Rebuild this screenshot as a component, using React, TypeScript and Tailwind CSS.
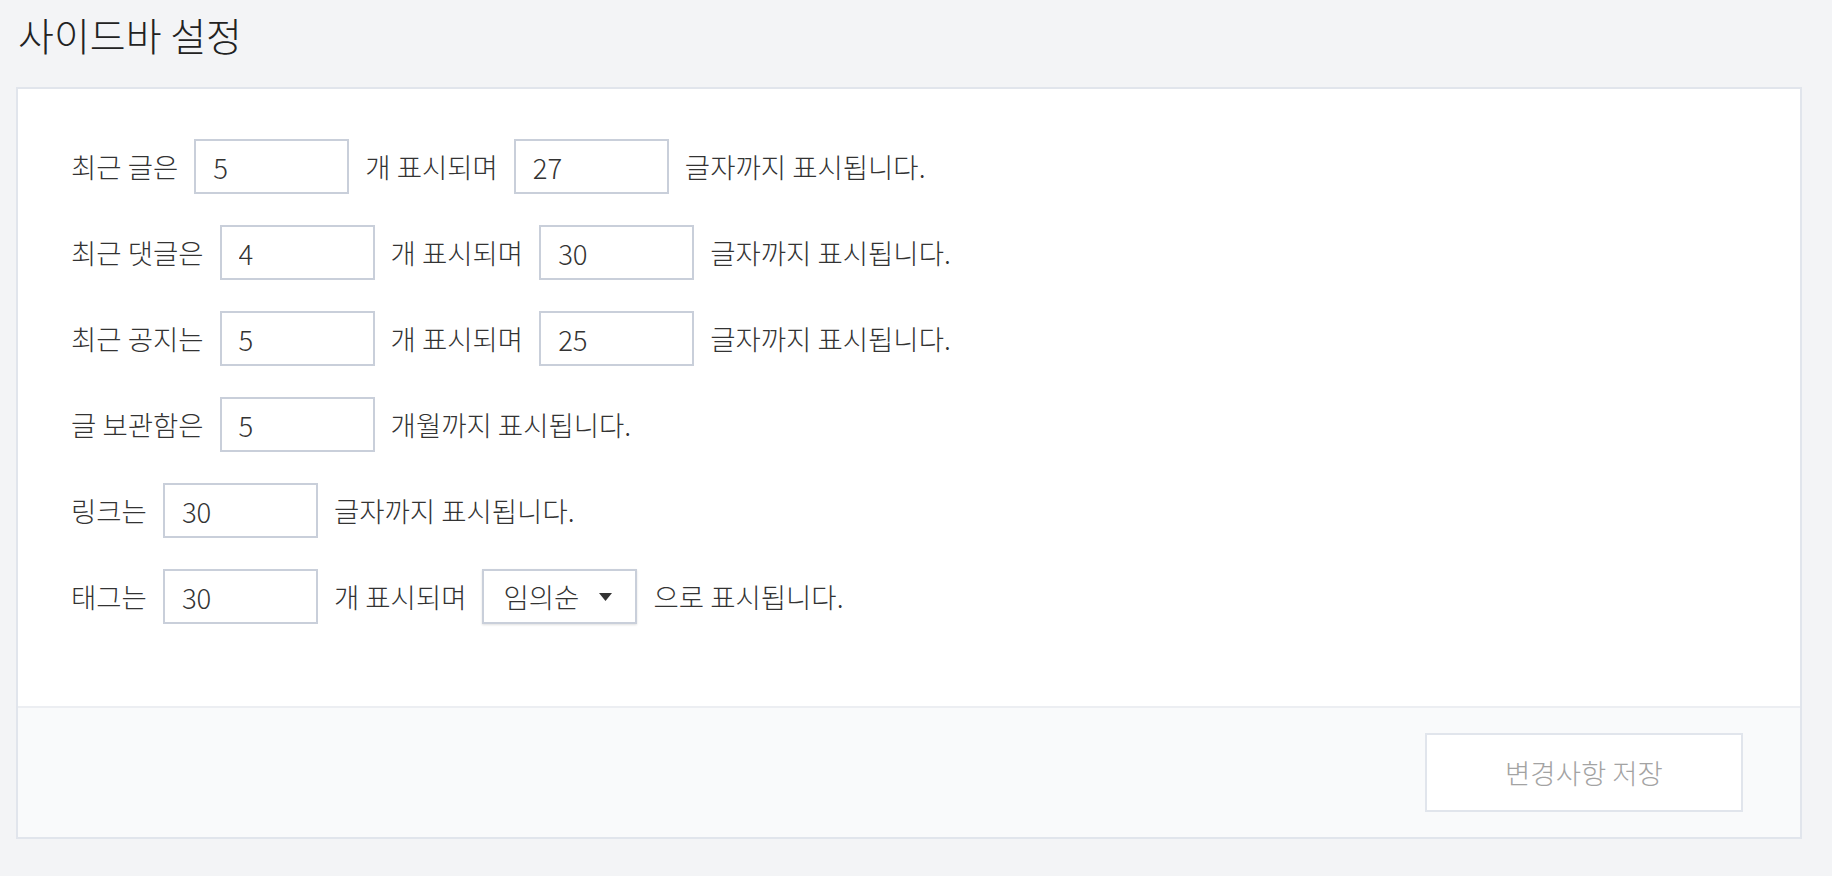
import React from "react";

type Part = { kind: "text"; value: string } | { kind: "input"; value: string } | { kind: "select"; value: string };

const rows: Part[][] = [
  [
    { kind: "text", value: "최근 글은" },
    { kind: "input", value: "5" },
    { kind: "text", value: "개 표시되며" },
    { kind: "input", value: "27" },
    { kind: "text", value: "글자까지 표시됩니다." },
  ],
  [
    { kind: "text", value: "최근 댓글은" },
    { kind: "input", value: "4" },
    { kind: "text", value: "개 표시되며" },
    { kind: "input", value: "30" },
    { kind: "text", value: "글자까지 표시됩니다." },
  ],
  [
    { kind: "text", value: "최근 공지는" },
    { kind: "input", value: "5" },
    { kind: "text", value: "개 표시되며" },
    { kind: "input", value: "25" },
    { kind: "text", value: "글자까지 표시됩니다." },
  ],
  [
    { kind: "text", value: "글 보관함은" },
    { kind: "input", value: "5" },
    { kind: "text", value: "개월까지 표시됩니다." },
  ],
  [
    { kind: "text", value: "링크는" },
    { kind: "input", value: "30" },
    { kind: "text", value: "글자까지 표시됩니다." },
  ],
  [
    { kind: "text", value: "태그는" },
    { kind: "input", value: "30" },
    { kind: "text", value: "개 표시되며" },
    { kind: "select", value: "임의순" },
    { kind: "text", value: "으로 표시됩니다." },
  ],
];

function NumberBox({ value }: { value: string }) {
  return (
    <input
      type="text"
      defaultValue={value}
      className="h-[55px] w-[155px] border-2 border-[#c9cfda] bg-white px-[17px] text-[27.5px] font-light text-[#333] outline-none"
    />
  );
}

function OrderSelect({ value }: { value: string }) {
  return (
    <button
      type="button"
      className="flex h-[55px] w-[155px] items-center justify-between border-2 border-[#c9cfda] bg-white pl-[19px] pr-[23px] text-[27.5px] font-light text-[#333] shadow-[0_1px_2px_rgba(0,0,0,0.12)]"
    >
      <span>{value}</span>
      <svg width="13" height="8" viewBox="0 0 13 8">
        <path d="M0 0h13L6.5 8z" fill="#333" />
      </svg>
    </button>
  );
}

export default function App() {
  return (
    <div
      className="min-h-[876px] bg-[#f3f4f6] pt-[6px] pl-4 pr-[30px] text-[#333]"
      style={{ fontFamily: '"Noto Sans CJK KR", "Noto Sans", sans-serif' }}
    >
      <h1 className="pl-[2px] text-[39px] leading-[56px] font-light text-[#222]">사이드바 설정</h1>
      <section className="mt-[25px] border-2 border-[#e1e5ec] bg-white">
        <div className="flex flex-col gap-[31px] pt-[50px] pb-[82px] pl-[53px]">
          {rows.map((row, i) => (
            <div key={i} className="flex items-center gap-[16px] text-[27.5px] font-light">
              {row.map((p, j) =>
                p.kind === "text" ? (
                  <span key={j}>{p.value}</span>
                ) : p.kind === "input" ? (
                  <NumberBox key={j} value={p.value} />
                ) : (
                  <OrderSelect key={j} value={p.value} />
                ),
              )}
            </div>
          ))}
        </div>
        <div className="flex justify-end border-t-2 border-[#eceef2] bg-[#f9fafb] pt-[25px] pb-[25px] pr-[57px]">
          <button
            type="button"
            className="h-[79px] w-[318px] border-2 border-[#e1e5ec] bg-white text-[27.5px] font-light text-[#a3a3a3]"
          >
            변경사항 저장
          </button>
        </div>
      </section>
    </div>
  );
}
